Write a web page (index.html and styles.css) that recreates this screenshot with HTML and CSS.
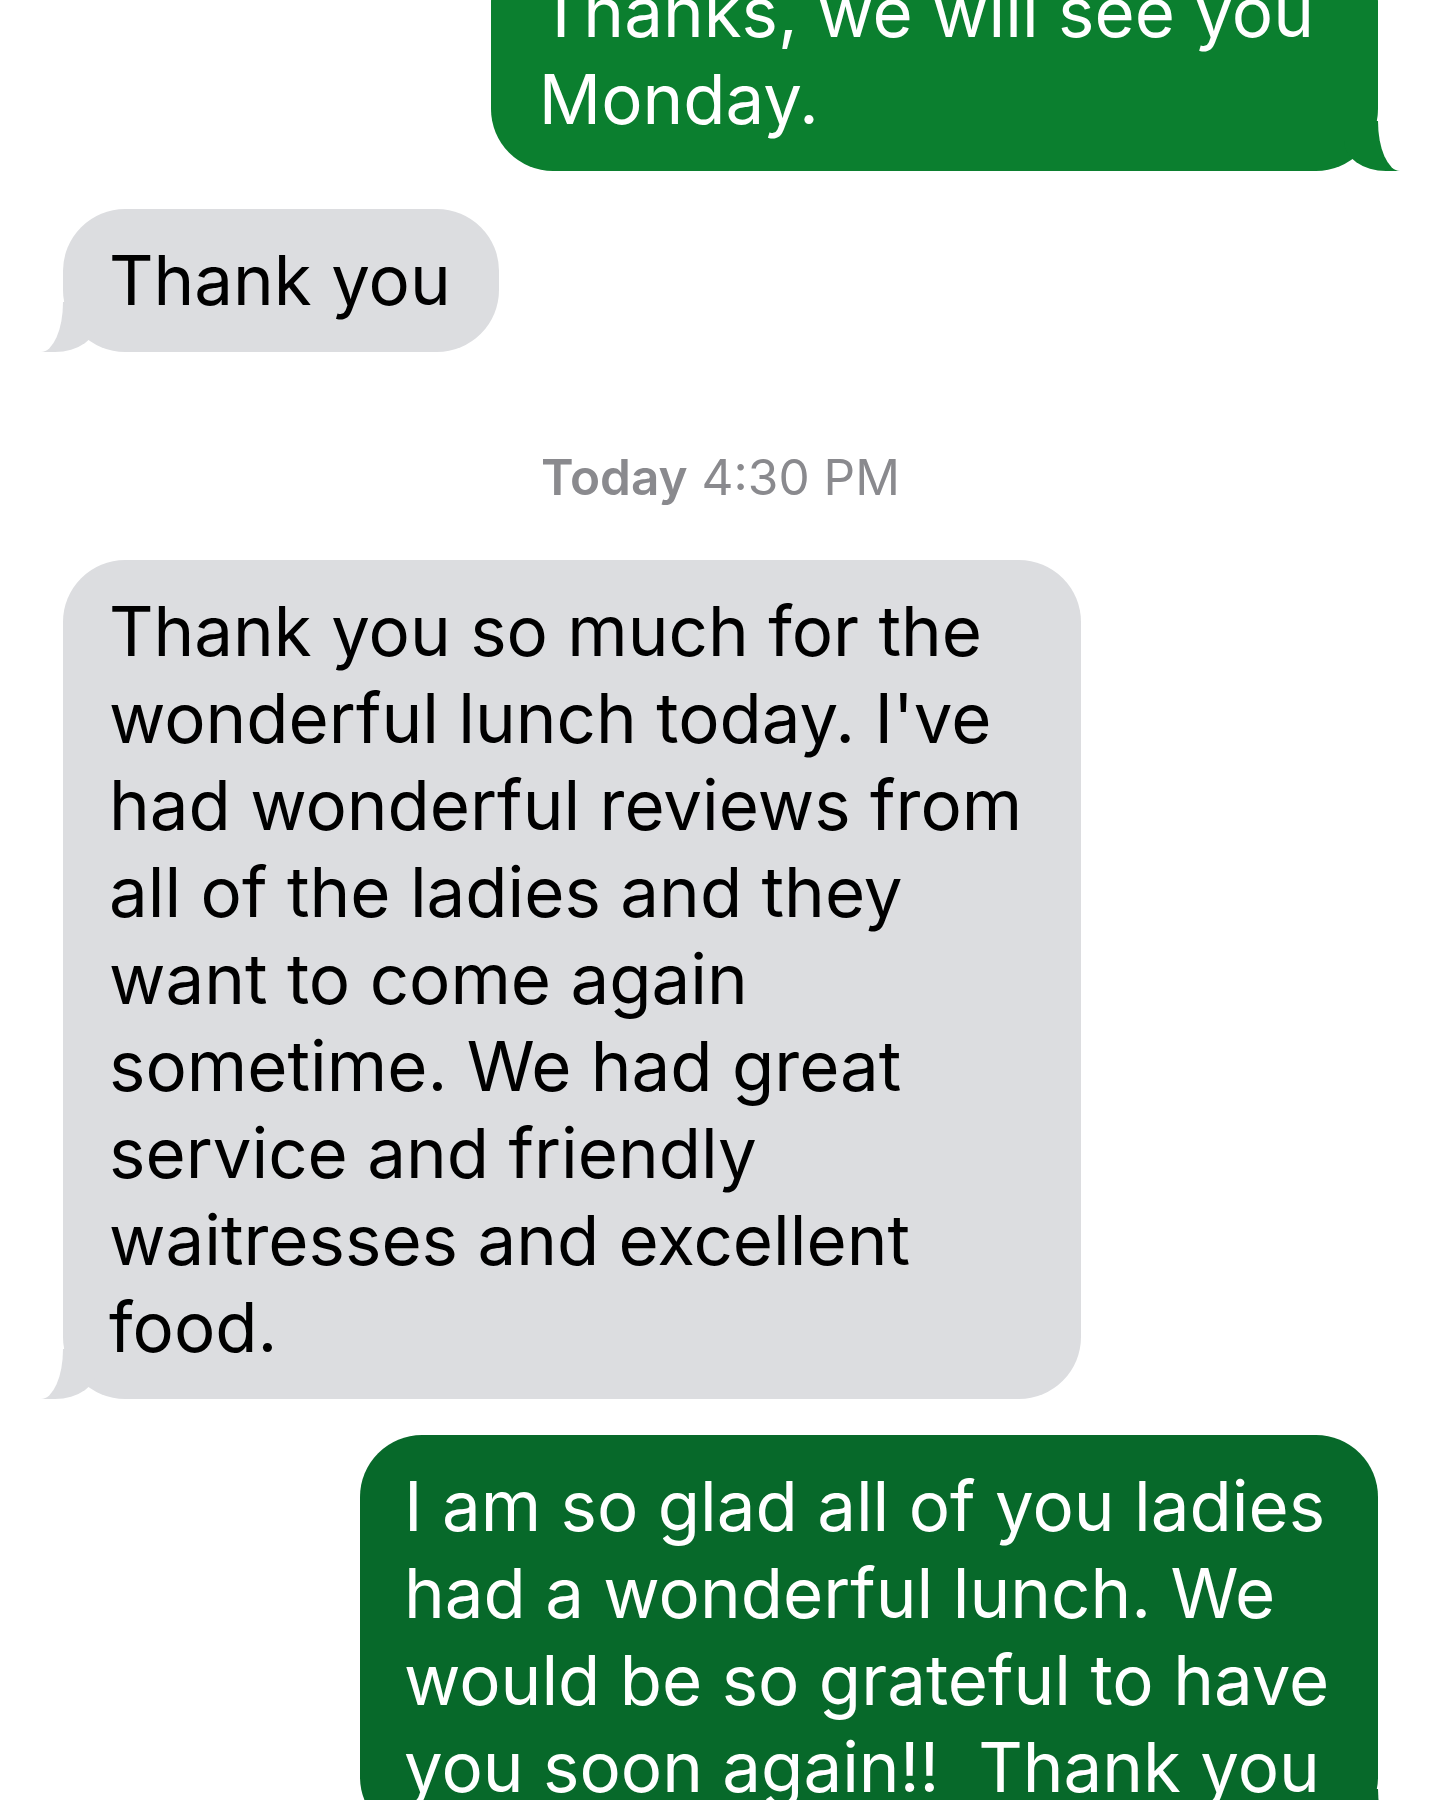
FILE: index.html
```html
<!DOCTYPE html>
<html lang="en">
<head>
  <meta charset="UTF-8" />
  <meta name="viewport" content="width=device-width, initial-scale=1.0" />
  <title>Messages</title>
  <link rel="stylesheet" href="styles.css">
</head>
<body>
  <div class="thread">
    <div class="bubble me first">Thanks, we will see you<br>Monday.</div>

    <div class="bubble them">Thank you</div>

    <p class="stamp"><strong>Today</strong> 4:30 PM</p>

    <div class="bubble them long">Thank you so much for the<br>wonderful lunch today. I've<br>had wonderful reviews from<br>all of the ladies and they<br>want to come again<br>sometime. We had great<br>service and friendly<br>waitresses and excellent<br>food.</div>

    <div class="bubble me dark long">I am so glad all of you ladies<br>had a wonderful lunch. We<br>would be so grateful to have<br>you soon again!!&nbsp; Thank you</div>
  </div>
</body>
</html>
```

FILE: styles.css
```css
body {
  margin: 0;
  background: #fff;
  font-family: Inter, "Noto Sans", sans-serif;
  overflow: hidden;
}

.thread {
  display: flex;
  flex-direction: column;
  padding: 0 62px 0 63px;
}

.bubble {
  position: relative;
  padding: 28px 48px;
  border-radius: 62px;
  font-size: 69px;
  line-height: 87px;
  white-space: nowrap;
  box-sizing: border-box;
}

.bubble.long {
  width: 1018px;
}

.bubble.first {
  margin-top: -59px;
}

/* sent, on the right */
.me {
  align-self: flex-end;
  background: #0b7f2f;
  color: #fff;
  padding-right: 64px;
  margin-bottom: 38px;
}

.me.dark {
  background: #07692a;
  padding-left: 44px;
  padding-right: 48px;
}

.me::before {
  content: "";
  position: absolute;
  right: -22px;
  bottom: 0;
  width: 56px;
  height: 50px;
  background: inherit;
  border-bottom-left-radius: 42px 30px;
}

.me::after {
  content: "";
  position: absolute;
  right: -40px;
  bottom: 0;
  width: 40px;
  height: 70px;
  background: #fff;
  border-bottom-left-radius: 22px 50px;
}

/* received, on the left */
.them {
  align-self: flex-start;
  background: #dcdde0;
  color: #000;
  padding-left: 46px;
  margin-bottom: 36px;
}

.them::before {
  content: "";
  position: absolute;
  left: -22px;
  bottom: 0;
  width: 56px;
  height: 50px;
  background: inherit;
  border-bottom-right-radius: 42px 30px;
}

.them::after {
  content: "";
  position: absolute;
  left: -40px;
  bottom: 0;
  width: 40px;
  height: 70px;
  background: #fff;
  border-bottom-right-radius: 22px 50px;
}

.stamp {
  margin: 59px 0 53px;
  text-align: center;
  font-size: 49.5px;
  line-height: 60px;
  color: #8a8a8e;
}

.stamp strong {
  font-weight: 600;
}
```
